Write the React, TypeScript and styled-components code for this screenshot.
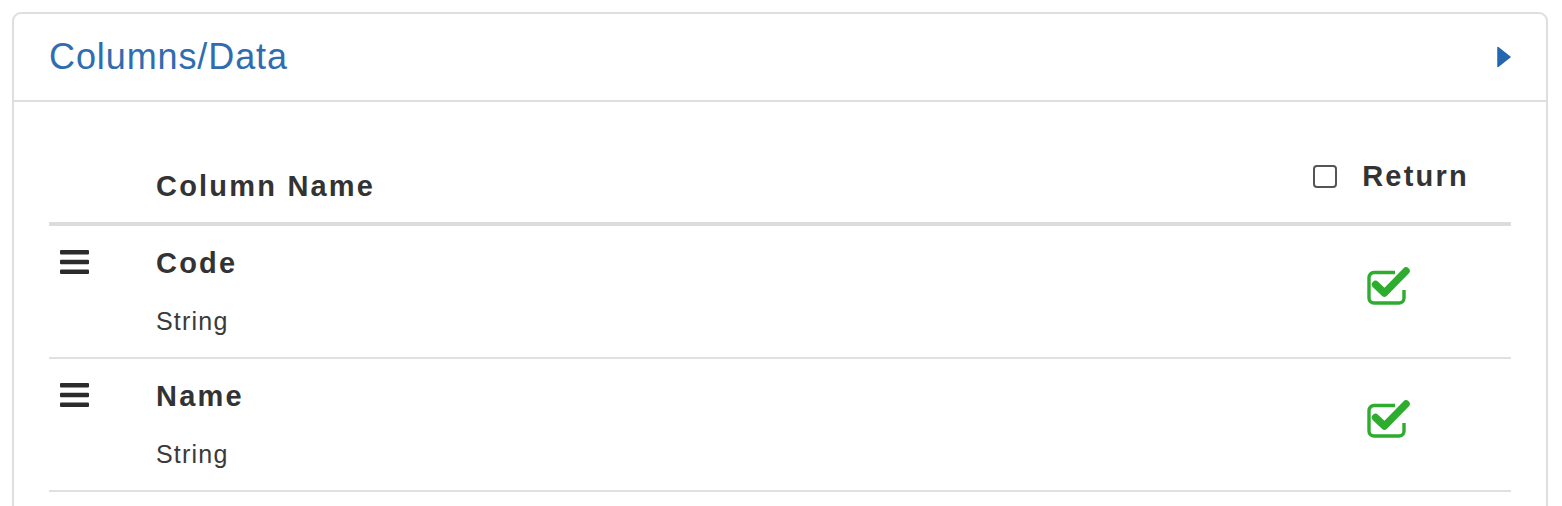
import { FC } from 'react';
import styled, { createGlobalStyle } from 'styled-components';

interface IColumn {
  name: string;
  type: string;
  returned: boolean;
}

const columns: IColumn[] = [
  { name: 'Code', type: 'String', returned: true },
  { name: 'Name', type: 'String', returned: true },
];

const DragHandle: FC = () => (
  <svg width="29" height="24" viewBox="0 0 29 24" aria-hidden="true">
    <rect x="0" y="0" width="29" height="4.5" rx="1" fill="#2b2b2b" />
    <rect x="0" y="9.7" width="29" height="4.5" rx="1" fill="#2b2b2b" />
    <rect x="0" y="19.4" width="29" height="4.5" rx="1" fill="#2b2b2b" />
  </svg>
);

const CheckSquare: FC = () => (
  <svg width="44" height="39" viewBox="0 0 44 39" aria-hidden="true">
    <path
      d="M28 6.5 H7 a5 5 0 0 0 -5 5 V32 a5 5 0 0 0 5 5 H32 a5 5 0 0 0 5 -5 V24"
      fill="none"
      stroke="#2eac2e"
      strokeWidth="3.4"
    />
    <path
      d="M8.5 18.5 L17.5 27 L39 5"
      fill="none"
      stroke="#2eac2e"
      strokeWidth="7.5"
      strokeLinecap="round"
      strokeLinejoin="round"
    />
  </svg>
);

const Caret: FC = () => (
  <svg width="14" height="22" viewBox="0 0 14 22" aria-hidden="true">
    <path d="M1 1.5 L13 11 L1 20.5 Z" fill="#2467b0" stroke="#2467b0" strokeWidth="1.5" strokeLinejoin="round" />
  </svg>
);

const App: FC = () => {
  return (
    <>
      <GlobalStyle />
      <Panel>
        <PanelHeading>
          <PanelTitle>Columns/Data</PanelTitle>
          <Caret />
        </PanelHeading>
        <PanelBody>
          <HeadRow>
            <Cell />
            <HeadCell>Column Name</HeadCell>
            <ReturnHead>
              <HeadCheckbox type="checkbox" aria-label="Return all" />
              <span>Return</span>
            </ReturnHead>
          </HeadRow>
          {columns.map((col) => (
            <Row key={col.name}>
              <HandleCell>
                <DragHandle />
              </HandleCell>
              <NameCell>
                <ColName>{col.name}</ColName>
                <ColType>{col.type}</ColType>
              </NameCell>
              <ReturnCell>{col.returned && <CheckSquare />}</ReturnCell>
            </Row>
          ))}
        </PanelBody>
      </Panel>
    </>
  );
};

export default App;

const GlobalStyle = createGlobalStyle`
  html, body {
    margin: 0;
    padding: 0;
    background: #fff;
    font-family: "Liberation Sans", Arial, sans-serif;
    color: #333;
  }
`;

const Panel = styled.div`
  margin: 12px 14px 0 12px;
  border: 2px solid #dedede;
  border-radius: 9px;
  background: #fff;
  padding-bottom: 40px;
`;

const PanelHeading = styled.div`
  display: flex;
  align-items: center;
  justify-content: space-between;
  height: 86px;
  padding: 0 35px;
  border-bottom: 2px solid #dedede;
`;

const PanelTitle = styled.h3`
  margin: 0;
  font-size: 36px;
  font-weight: normal;
  letter-spacing: 0.9px;
  line-height: 40px;
  color: #2f6db0;
`;

const PanelBody = styled.div`
  padding: 0 35px;
`;

const Grid = styled.div`
  display: grid;
  grid-template-columns: 107px 1fr 240px;
`;

const HeadRow = styled(Grid)`
  height: 120px;
  align-items: end;
  border-bottom: 4px solid #dcdcdc;
`;

const Row = styled(Grid)`
  height: 131px;
  border-bottom: 2px solid #e0e0e0;
`;

const Cell = styled.div``;

const BoldText = styled.div`
  font-size: 29px;
  font-weight: bold;
  letter-spacing: 2.2px;
  line-height: 40px;
  color: #333;
`;

const HeadCell = styled(BoldText)`
  padding-bottom: 16px;
`;

const ReturnHead = styled(BoldText)`
  display: flex;
  align-items: center;
  justify-content: center;
  gap: 25px;
  padding-bottom: 26px;
`;

const HeadCheckbox = styled.input`
  appearance: none;
  margin: 0;
  width: 24px;
  height: 23px;
  border: 2px solid #555;
  border-radius: 4px;
  background: #fff;
`;

const HandleCell = styled.div`
  padding: 24px 0 0 11px;
`;

const NameCell = styled.div`
  padding-top: 17px;
`;

const ColName = styled(BoldText)``;

const ColType = styled.div`
  margin-top: 21px;
  font-size: 25px;
  letter-spacing: 1.2px;
  line-height: 34px;
  color: #3a3a3a;
`;

const ReturnCell = styled.div`
  display: flex;
  justify-content: center;
  padding: 40px 5px 0 0;
`;
